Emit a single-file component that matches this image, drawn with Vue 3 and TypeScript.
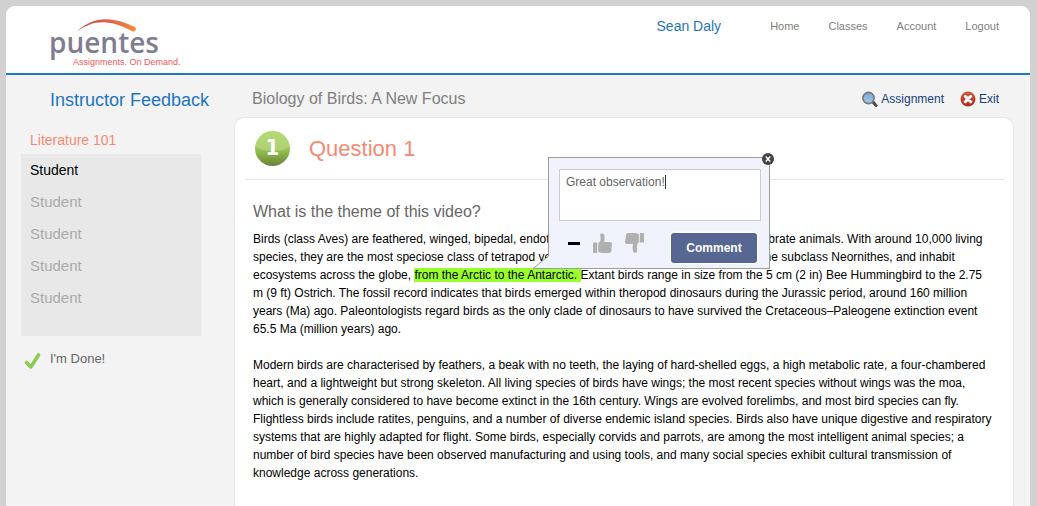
<script setup lang="ts">
import { ref } from 'vue'

interface Student {
  id: number
  name: string
}

const menu: string[] = ['Home', 'Classes', 'Account', 'Logout']
const students: Student[] = [1, 2, 3, 4, 5].map((id) => ({ id, name: 'Student' }))
const selected = ref(1)
const comment = ref('Great observation!')
const open = ref(true)
</script>

<template>
  <div class="page">
    <header class="top">
      <a href="#" class="brand" aria-label="puentes home">
        <svg class="arc" width="62" height="14" viewBox="0 0 62 14" aria-hidden="true">
          <defs>
            <linearGradient id="arcFill" x1="0" x2="1" y1="0" y2="0">
              <stop offset="0" stop-color="#c4474e" />
              <stop offset="0.5" stop-color="#dc5f4b" />
              <stop offset="1" stop-color="#f58a3a" />
            </linearGradient>
          </defs>
          <path d="M1 12.500C9 4.500 19 .2 30 .2c11 .1 20 3.600 28.500 7.600 2.700 1.300 1.200 5.400-1.800 4.600C48 7.500 40 4.300 30 3.400 19 2.600 10 6 1 12.500z" fill="url(#arcFill)" />
        </svg>
        <span class="wordmark">puentes</span>
        <span class="tagline">Assignments. On Demand.</span>
      </a>
      <nav class="menu">
        <a href="#" class="user">Sean Daly</a>
        <a v-for="item in menu" :key="item" href="#">{{ item }}</a>
      </nav>
    </header>

    <div class="columns">
      <aside class="side">
        <h1>Instructor Feedback</h1>
        <h2>Literature 101</h2>
        <div class="students">
          <button
            v-for="s in students"
            :key="s.id"
            type="button"
            :class="{ active: s.id === selected }"
            @click="selected = s.id"
          >{{ s.name }}</button>
        </div>
        <button type="button" class="done">
          <svg width="17" height="18" viewBox="0 0 17 18" aria-hidden="true">
            <path d="M2.500 10.500l4.300 4.500L14.500 3" fill="none" stroke="#8ccc55" stroke-width="3.600" stroke-linecap="round" stroke-linejoin="round" />
          </svg>
          <span>I'm Done!</span>
        </button>
      </aside>

      <main class="main">
        <div class="bar">
          <h2>Biology of Birds: A New Focus</h2>
          <div class="tools">
            <a href="#">
              <svg width="16" height="16" viewBox="0 0 16 16" aria-hidden="true">
                <defs>
                  <linearGradient id="lens" x1="0" x2="0" y1="0" y2="1">
                    <stop offset="0" stop-color="#79a5d1" />
                    <stop offset="1" stop-color="#a5cdf0" />
                  </linearGradient>
                </defs>
                <path d="M10.500 10.500l3.500 4" stroke="#4d4d4d" stroke-width="3" stroke-linecap="round" />
                <circle cx="6.500" cy="7" r="5.600" fill="url(#lens)" stroke="#777" stroke-width="1.600" />
              </svg>
              <span>Assignment</span>
            </a>
            <a href="#">
              <svg width="16" height="16" viewBox="0 0 16 16" aria-hidden="true">
                <defs>
                  <linearGradient id="stop" x1="0" x2="0" y1="0" y2="1">
                    <stop offset="0" stop-color="#d9573b" />
                    <stop offset="1" stop-color="#a9301c" />
                  </linearGradient>
                </defs>
                <circle cx="8" cy="8" r="7.500" fill="url(#stop)" />
                <path d="M5.300 5.300l5.400 5.400M10.700 5.300l-5.400 5.400" stroke="#fff" stroke-width="3" stroke-linecap="round" />
              </svg>
              <span>Exit</span>
            </a>
          </div>
        </div>

        <section class="panel">
          <div class="question">
            <span class="number">1</span>
            <h3>Question 1</h3>
          </div>
          <div class="answer">
            <h4>What is the theme of this video?</h4>
            <p>
              Birds (class Aves) are feathered, winged, bipedal, endothermic (warm-blooded), egg-laying, vertebrate animals. With around 10,000 living species, they are the most speciose class of tetrapod vertebrates. All present species belong to the subclass Neornithes, and inhabit ecosystems across the globe, <mark>from the Arctic to the Antarctic. </mark>Extant birds range in size from the 5 cm (2 in) Bee Hummingbird to the 2.75 m (9 ft) Ostrich. The fossil record indicates that birds emerged within theropod dinosaurs during the Jurassic period, around 160 million years (Ma) ago. Paleontologists regard birds as the only clade of dinosaurs to have survived the Cretaceous–Paleogene extinction event 65.5 Ma (million years) ago.
            </p>
            <p>
              Modern birds are characterised by feathers, a beak with no teeth, the laying of hard-shelled eggs, a high metabolic rate, a four-chambered heart, and a lightweight but strong skeleton. All living species of birds have wings; the most recent species without wings was the moa, which is generally considered to have become extinct in the 16th century. Wings are evolved forelimbs, and most bird species can fly. Flightless birds include ratites, penguins, and a number of diverse endemic island species. Birds also have unique digestive and respiratory systems that are highly adapted for flight. Some birds, especially corvids and parrots, are among the most intelligent animal species; a number of bird species have been observed manufacturing and using tools, and many social species exhibit cultural transmission of knowledge across generations.
            </p>
          </div>

          <form v-if="open" class="popup" @submit.prevent>
            <svg class="tail" width="17" height="13" viewBox="0 0 17 13" aria-hidden="true">
              <path d="M17 0L1 12.500H17z" fill="#f0f3fb" />
              <path d="M16 .5L1 12.500H17" fill="none" stroke="#9b9b9b" />
            </svg>
            <button type="button" class="close" aria-label="Close" @click="open = false">
              <svg width="12" height="12" viewBox="0 0 12 12" aria-hidden="true">
                <circle cx="6" cy="6" r="6" fill="#444" />
                <path d="M3.800 3.500l4.400 5M8.200 3.500l-4.400 5" stroke="#fff" stroke-width="1.500" />
              </svg>
            </button>
            <div class="field">
              <textarea v-model="comment" aria-label="Comment text" spellcheck="false"></textarea>
              <i class="caret"></i>
            </div>
            <div class="actions">
              <button type="button" class="rate" aria-label="Neutral">
                <svg width="12" height="20" viewBox="0 0 12 20" aria-hidden="true">
                  <path d="M0 10.500h12" stroke="#000" stroke-width="3" />
                </svg>
              </button>
              <button type="button" class="rate" aria-label="Thumbs up">
                <svg width="19" height="20" viewBox="0 0 19 20" aria-hidden="true">
                  <path d="M0 9.500h4.200V20H0zM5.200 10.200C7 9 8 7 7.600 4.500L7 1.200C8.500-.2 11 .2 11.400 2.500c.4 2 .2 4-.4 6.500h6c1.600 0 2 1 1.900 2.200L18.400 18c-.2 1.300-1 2-2.400 2H9c-1.500 0-2.500-.8-3.800-1.200z" fill="#b0b0b0" />
                </svg>
              </button>
              <button type="button" class="rate" aria-label="Thumbs down">
                <svg width="19" height="20" viewBox="0 0 19 20" aria-hidden="true">
                  <path d="M19 0v9.500h-4.200V0zM13.800 9.800C12 11 11.700 13 12 15.500l.2 3.300c-1 1.500-3.700 1.500-4.200-.8-.4-2-.6-4 0-7H2C.6 11-.1 10 .1 8.800L1 2C1.200.7 2 0 3.400 0H10c1.500 0 2.500.8 3.800 1.200z" fill="#b0b0b0" />
                </svg>
              </button>
              <button type="submit" class="send">Comment</button>
            </div>
          </form>
        </section>
      </main>
    </div>
  </div>
</template>

<style>
body {
  background: #d1d1d1;
}
</style>

<style scoped>
.page {
  margin: 6px 7px 0 6px;
  min-height: calc(100vh - 6px);
  border-radius: 9px 9px 0 0;
  overflow: hidden;
  display: flex;
  flex-direction: column;
  background: #f3f3f3;
  color: #000;
  font-family: "Liberation Sans", Arial, Helvetica, sans-serif;
}
.page * {
  box-sizing: border-box;
}
h1, h2, h3, h4, p {
  margin: 0;
  font-weight: normal;
}
a {
  color: inherit;
  text-decoration: none;
}
button {
  margin: 0;
  padding: 0;
  border: 0;
  background: none;
  font-family: inherit;
  text-align: left;
  cursor: pointer;
}
svg {
  display: block;
}
.top {
  display: flex;
  justify-content: space-between;
  align-items: flex-start;
  height: 69px;
  padding: 12px 31px 0 43px;
  border-bottom: 2px solid #1f7abf;
  background: #fff;
}
.brand {
  position: relative;
  display: flex;
  flex-direction: column;
}
.arc {
  position: absolute;
  left: 27px;
  top: 1px;
}
.wordmark {
  margin-top: 10px;
  color: #7f7d92;
  font: 600 28px/28px "Open Sans", sans-serif;
}
.tagline {
  margin-left: 24px;
  color: #f2555a;
  font-size: 9px;
  line-height: 13px;
  white-space: nowrap;
}
.menu {
  display: flex;
  align-items: center;
  gap: 29px;
  color: #808080;
  font-size: 11px;
  line-height: 16px;
}
.user {
  margin-right: 20px;
  color: #1f74c0;
  font-size: 14px;
}
.columns {
  flex: 1;
  display: grid;
  grid-template-columns: 228px 1fr;
}
.side {
  padding: 0 33px 0 15px;
}
.side h1 {
  margin: 15px 0 0 29px;
  color: #1f74c0;
  font-size: 18px;
  line-height: 20px;
  white-space: nowrap;
}
.side h2 {
  margin: 21px 0 5px 9px;
  color: #f58a74;
  font-size: 14px;
  line-height: 18px;
}
.students {
  display: flex;
  flex-direction: column;
  height: 182px;
  background: #e8e8e8;
}
.students button {
  padding-left: 9px;
  color: #aaa;
  font-size: 15px;
  line-height: 32px;
}
.students .active {
  color: #000;
  font-size: 14px;
}
.done {
  display: flex;
  gap: 9px;
  margin: 14px 0 0 3px;
  color: #666;
  font-size: 13px;
  line-height: 18px;
}
.done svg {
  margin-top: 2px;
}
.main {
  display: flex;
  flex-direction: column;
  padding-right: 16px;
}
.bar {
  display: flex;
  justify-content: space-between;
  align-items: center;
  height: 42px;
  padding: 5px 15px 0 18px;
}
.bar h2 {
  color: #808080;
  font-size: 16px;
  line-height: 20px;
}
.tools {
  display: flex;
  gap: 16px;
  color: #14407c;
  font-size: 12px;
}
.tools a {
  display: flex;
  align-items: center;
  gap: 3px;
  line-height: 16px;
}
.panel {
  position: relative;
  flex: 1;
  padding: 0 9px 24px 10px;
  border: 1px solid #e6e6e6;
  border-bottom: 0;
  border-radius: 10px 10px 0 0;
  background: #fff;
}
.question {
  display: flex;
  align-items: center;
  gap: 19px;
  height: 62px;
  padding-left: 10px;
  border-bottom: 1px solid #e4e4e4;
}
.number {
  width: 35px;
  height: 35px;
  border-radius: 50%;
  background:
    radial-gradient(ellipse 24px 17px at 50% 10%, rgba(255, 255, 255, 0.2) 98%, transparent),
    linear-gradient(#a3d152, #9bc653 50%, #668336);
  color: #fff;
  font: 700 22px/33px "DejaVu Sans Condensed", "DejaVu Sans", sans-serif;
  text-align: center;
}
.question h3 {
  color: #f58a74;
  font-size: 22px;
  line-height: 28px;
}
.answer {
  padding: 22px 10px 0 8px;
}
.answer h4 {
  margin-bottom: 8px;
  color: #666;
  font-size: 16px;
  line-height: 20px;
}
.answer p {
  margin-bottom: 18px;
  font-size: 12px;
  line-height: 18px;
}
mark {
  background: #99ff2d;
  color: inherit;
}
.popup {
  position: absolute;
  left: 313px;
  top: 39px;
  width: 222px;
  padding: 11px 8px 5px 10px;
  border: 1px solid #9b9b9b;
  background: #f0f3fb;
}
.tail {
  position: absolute;
  left: -17px;
  bottom: -1px;
}
.close {
  position: absolute;
  right: -5px;
  top: -5px;
}
.field {
  position: relative;
}
textarea {
  display: block;
  width: 100%;
  height: 52px;
  padding: 4px 6px;
  border: 1px solid #ccc;
  border-radius: 0;
  outline: 0;
  resize: none;
  background: #fff;
  color: #666;
  font: 12px/16px "Liberation Sans", Arial, sans-serif;
}
.caret {
  position: absolute;
  left: 106px;
  top: 6px;
  width: 1px;
  height: 14px;
  background: #333;
}
.actions {
  display: flex;
  align-items: flex-start;
  gap: 13px;
  padding: 12px 4px 0 9px;
}
.send {
  width: 86px;
  height: 30px;
  margin-left: auto;
  border-radius: 3px;
  background: #566794;
  box-shadow: 0 0 2px 1px #fff;
  color: #fff;
  font-size: 12px;
  font-weight: bold;
  text-align: center;
}
</style>
